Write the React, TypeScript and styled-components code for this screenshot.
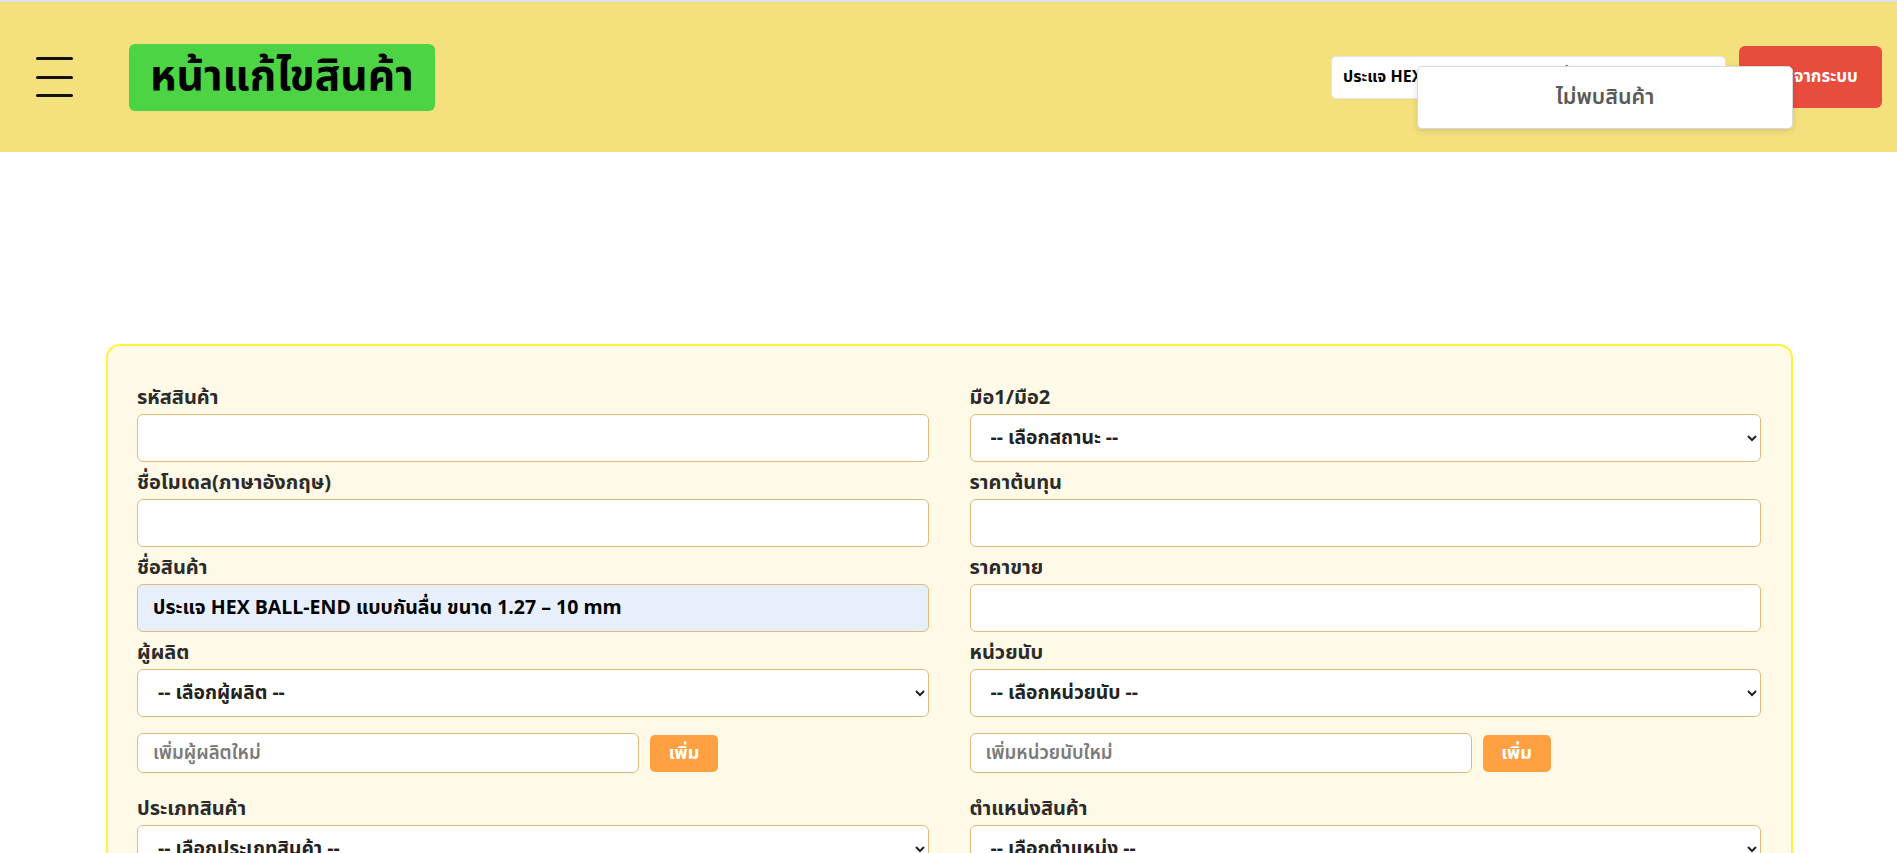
import React from "react";
import styled, { createGlobalStyle } from "styled-components";

const Global = createGlobalStyle`
  html { scrollbar-width: none; }
  html::-webkit-scrollbar { display: none; }
  body {
    margin: 0;
    background: #ffffff;
    font-family: "Noto Sans Thai", "Noto Sans", "Open Sans", sans-serif;
    color: #222;
  }
  * { box-sizing: border-box; }
`;

const Header = styled.header`
  height: 152px;
  border-top: 2px solid #dbe4ec;
  background: #f4e07d;
  display: flex;
  align-items: center;
  justify-content: space-between;
  padding: 0 15px 0 36px;
`;

const LeftGroup = styled.div`
  display: flex;
  align-items: center;
  gap: 56px;
`;

const Burger = styled.button`
  width: 37px;
  height: 40px;
  padding: 0;
  border: none;
  background: transparent;
  display: flex;
  flex-direction: column;
  justify-content: space-between;
  cursor: pointer;
`;

const BurgerLine = styled.span`
  display: block;
  height: 3px;
  width: 100%;
  background: #111;
  border-radius: 2px;
`;

const TitleBadge = styled.h1`
  margin: 0;
  height: 67px;
  padding: 0 21px;
  display: flex;
  align-items: center;
  background: #4cd444;
  border-radius: 6px;
  font-size: 42.5px;
  font-weight: 700;
  color: #000;
`;

const RightGroup = styled.div`
  display: flex;
  align-items: center;
  gap: 13px;
`;

const SearchWrap = styled.div`
  position: relative;
`;

const SearchInput = styled.input`
  width: 395px;
  height: 43px;
  border: 1px solid #e4e4e4;
  border-radius: 5px;
  background: #fff;
  padding: 0 11px;
  font-family: inherit;
  font-size: 16px;
  font-weight: 700;
  color: #000;
  outline: none;
`;

const Dropdown = styled.div`
  position: absolute;
  top: 10px;
  left: 86px;
  width: 376px;
  height: 63px;
  background: #fff;
  border: 1px solid #d9d9d9;
  border-radius: 5px;
  box-shadow: 0 2px 6px rgba(0, 0, 0, 0.12);
  display: flex;
  align-items: center;
  justify-content: center;
  font-size: 21.5px;
  font-weight: 600;
  color: #5a5a5a;
`;

const LogoutButton = styled.button`
  width: 143px;
  height: 62px;
  border: none;
  border-radius: 6px;
  background: #e84c3d;
  color: #fff;
  font-family: inherit;
  font-size: 17px;
  font-weight: 700;
  cursor: pointer;
`;

const Main = styled.main`
  padding: 192px 0 40px;
`;

const Card = styled.form`
  width: 1687px;
  margin: 0 auto 0 106px;
  background: #fefae7;
  border: 2px solid #fff23c;
  border-radius: 14px;
  padding: 39px 30px 40px 29px;
  display: grid;
  grid-template-columns: 1fr 1fr;
  column-gap: 41px;
`;

const Field = styled.div`
  display: flex;
  flex-direction: column;
`;

const Label = styled.label<{ $first?: boolean }>`
  display: block;
  font-size: 20px;
  font-weight: 700;
  line-height: 27px;
  color: #2b2b2b;
  margin: ${(p) => (p.$first ? "0 0 2px" : "8px 0 2px")};
`;

const TextInput = styled.input<{ $filled?: boolean }>`
  width: 100%;
  height: 48px;
  border: 1px solid #e2bb7c;
  border-radius: 6px;
  background: ${(p) => (p.$filled ? "#e8f0fe" : "#ffffff")};
  padding: 0 15px;
  font-family: inherit;
  font-size: 19.5px;
  font-weight: 700;
  color: #000;
  outline: none;
`;

const Select = styled.select`
  width: 100%;
  height: 48px;
  border: 1px solid #e2bb7c;
  border-radius: 6px;
  background: #ffffff;
  padding: 0 6px 0 16px;
  font-family: inherit;
  font-size: 19.3px;
  font-weight: 700;
  color: #222;
  outline: none;
`;

const AddRow = styled.div`
  display: flex;
  align-items: center;
  gap: 11px;
  margin: 16px 0 15px;
`;

const AddInput = styled.input`
  width: 502px;
  height: 40px;
  border: 1px solid #e2bb7c;
  border-radius: 6px;
  background: #fff;
  padding: 0 15px;
  font-family: inherit;
  font-size: 18.6px;
  font-weight: 600;
  color: #222;
  outline: none;
  &::placeholder {
    color: #7a7a7a;
  }
`;

const AddButton = styled.button`
  width: 68px;
  height: 37px;
  border: none;
  border-radius: 5px;
  background: #ffa142;
  color: #fff;
  font-family: inherit;
  font-size: 18px;
  font-weight: 700;
  cursor: pointer;
`;

type FieldDef =
  | { kind: "input"; label: string; value?: string }
  | { kind: "select"; label: string; placeholder: string; add?: string };

const rows: [FieldDef, FieldDef][] = [
  [
    { kind: "input", label: "รหัสสินค้า" },
    { kind: "select", label: "มือ1/มือ2", placeholder: "-- เลือกสถานะ --" },
  ],
  [
    { kind: "input", label: "ชื่อโมเดล(ภาษาอังกฤษ)" },
    { kind: "input", label: "ราคาต้นทุน" },
  ],
  [
    { kind: "input", label: "ชื่อสินค้า", value: "ประแจ HEX BALL-END แบบกันลื่น ขนาด 1.27 – 10 mm" },
    { kind: "input", label: "ราคาขาย" },
  ],
  [
    { kind: "select", label: "ผู้ผลิต", placeholder: "-- เลือกผู้ผลิต --", add: "เพิ่มผู้ผลิตใหม่" },
    { kind: "select", label: "หน่วยนับ", placeholder: "-- เลือกหน่วยนับ --", add: "เพิ่มหน่วยนับใหม่" },
  ],
  [
    { kind: "select", label: "ประเภทสินค้า", placeholder: "-- เลือกประเภทสินค้า --" },
    { kind: "select", label: "ตำแหน่งสินค้า", placeholder: "-- เลือกตำแหน่ง --" },
  ],
  [
    { kind: "input", label: "จำนวนคงเหลือ" },
    { kind: "input", label: "จำนวนขั้นต่ำ" },
  ],
];

function renderField(f: FieldDef, first: boolean, key: string) {
  return (
    <Field key={key}>
      <Label $first={first}>{f.label}</Label>
      {f.kind === "input" ? (
        <TextInput $filled={!!f.value} defaultValue={f.value ?? ""} />
      ) : (
        <>
          <Select defaultValue="">
            <option value="">{f.placeholder}</option>
          </Select>
          {f.add && (
            <AddRow>
              <AddInput placeholder={f.add} />
              <AddButton type="button">เพิ่ม</AddButton>
            </AddRow>
          )}
        </>
      )}
    </Field>
  );
}

export default function App() {
  return (
    <>
      <Global />
      <Header>
        <LeftGroup>
          <Burger aria-label="menu">
            <BurgerLine />
            <BurgerLine />
            <BurgerLine />
          </Burger>
          <TitleBadge>หน้าแก้ไขสินค้า</TitleBadge>
        </LeftGroup>
        <RightGroup>
          <SearchWrap>
            <SearchInput defaultValue="ประแจ HEX BALL-END แบบกันลื่น ขนาด 1.27 – 10 mm" />
            <Dropdown>ไม่พบสินค้า</Dropdown>
          </SearchWrap>
          <LogoutButton type="button">ออกจากระบบ</LogoutButton>
        </RightGroup>
      </Header>
      <Main>
        <Card onSubmit={(e) => e.preventDefault()}>
          {rows.map((r, i) => (
            <React.Fragment key={i}>
              {renderField(r[0], i === 0, `l${i}`)}
              {renderField(r[1], i === 0, `r${i}`)}
            </React.Fragment>
          ))}
        </Card>
      </Main>
    </>
  );
}
